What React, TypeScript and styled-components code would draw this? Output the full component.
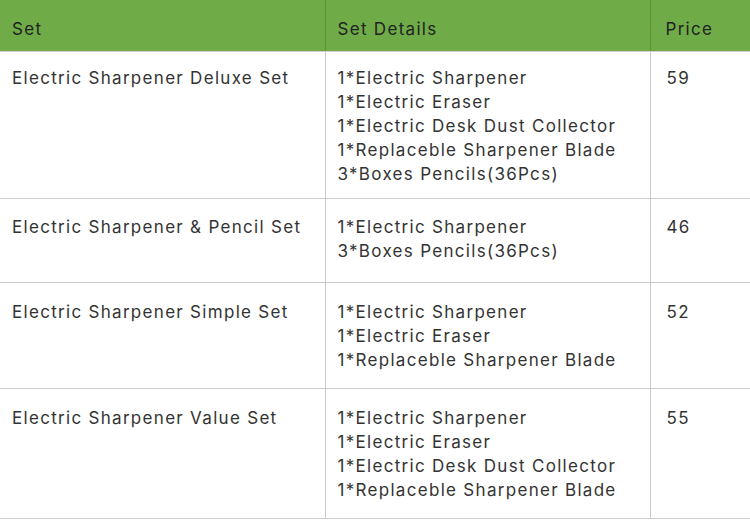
import React from "react";
import styled, { createGlobalStyle } from "styled-components";

const Global = createGlobalStyle`
  html, body { margin: 0; padding: 0; background: #ffffff; }
  body { font-family: Inter, "Open Sans", "Liberation Sans", sans-serif; }
  *, *::before, *::after { box-sizing: border-box; }
`;

const Table = styled.table`
  width: 750px;
  border-collapse: collapse;
  table-layout: fixed;
  font-size: 17px;
  letter-spacing: 1.3px;
  color: #333333;
`;

const Col = styled.col<{ $w?: number }>`
  width: ${(p) => (p.$w ? `${p.$w}px` : "auto")};
`;

const HeadRow = styled.tr`
  background: #6fac48;
  height: 51px;
`;

const HeadCell = styled.th<{ $pl: number }>`
  text-align: left;
  font-weight: 400;
  color: #222222;
  padding: 8px 0 0 ${(p) => p.$pl}px;
  border-right: 1px solid #5a8f3a;
  border-bottom: 1px solid #cfcfcf;
  vertical-align: middle;
  &:last-child { border-right: none; }
`;

const Row = styled.tr<{ $h: number }>`
  height: ${(p) => p.$h}px;
  border-bottom: 1px solid #cccccc;
`;

const Cell = styled.td<{ $pl: number; $pt: number }>`
  vertical-align: top;
  padding: ${(p) => p.$pt}px 0 0 ${(p) => p.$pl}px;
  line-height: 24px;
  border-right: 1px solid #cccccc;
  &:last-child { border-right: none; }
`;

const Line = styled.div`
  white-space: nowrap;
`;

const rows = [
  {
    name: "Electric Sharpener Deluxe Set",
    items: [
      "1*Electric Sharpener",
      "1*Electric Eraser",
      "1*Electric Desk Dust Collector",
      "1*Replaceble Sharpener Blade",
      "3*Boxes Pencils(36Pcs)",
    ],
    price: "59",
    h: 147,
    pt: 14,
  },
  {
    name: "Electric Sharpener & Pencil Set",
    items: ["1*Electric Sharpener", "3*Boxes Pencils(36Pcs)"],
    price: "46",
    h: 84,
    pt: 16,
  },
  {
    name: "Electric Sharpener Simple Set",
    items: ["1*Electric Sharpener", "1*Electric Eraser", "1*Replaceble Sharpener Blade"],
    price: "52",
    h: 106,
    pt: 17,
  },
  {
    name: "Electric Sharpener Value Set",
    items: [
      "1*Electric Sharpener",
      "1*Electric Eraser",
      "1*Electric Desk Dust Collector",
      "1*Replaceble Sharpener Blade",
    ],
    price: "55",
    h: 130,
    pt: 17,
  },
];

export default function App() {
  return (
    <>
      <Global />
      <Table>
        <colgroup>
          <Col $w={325} />
          <Col $w={325} />
          <Col />
        </colgroup>
        <thead>
          <HeadRow>
            <HeadCell $pl={12}>Set</HeadCell>
            <HeadCell $pl={12}>Set Details</HeadCell>
            <HeadCell $pl={15}>Price</HeadCell>
          </HeadRow>
        </thead>
        <tbody>
          {rows.map((r) => (
            <Row key={r.name} $h={r.h}>
              <Cell $pl={12} $pt={r.pt}>{r.name}</Cell>
              <Cell $pl={12} $pt={r.pt}>
                {r.items.map((it, i) => (
                  <Line key={i}>{it}</Line>
                ))}
              </Cell>
              <Cell $pl={16} $pt={r.pt}>{r.price}</Cell>
            </Row>
          ))}
        </tbody>
      </Table>
    </>
  );
}
